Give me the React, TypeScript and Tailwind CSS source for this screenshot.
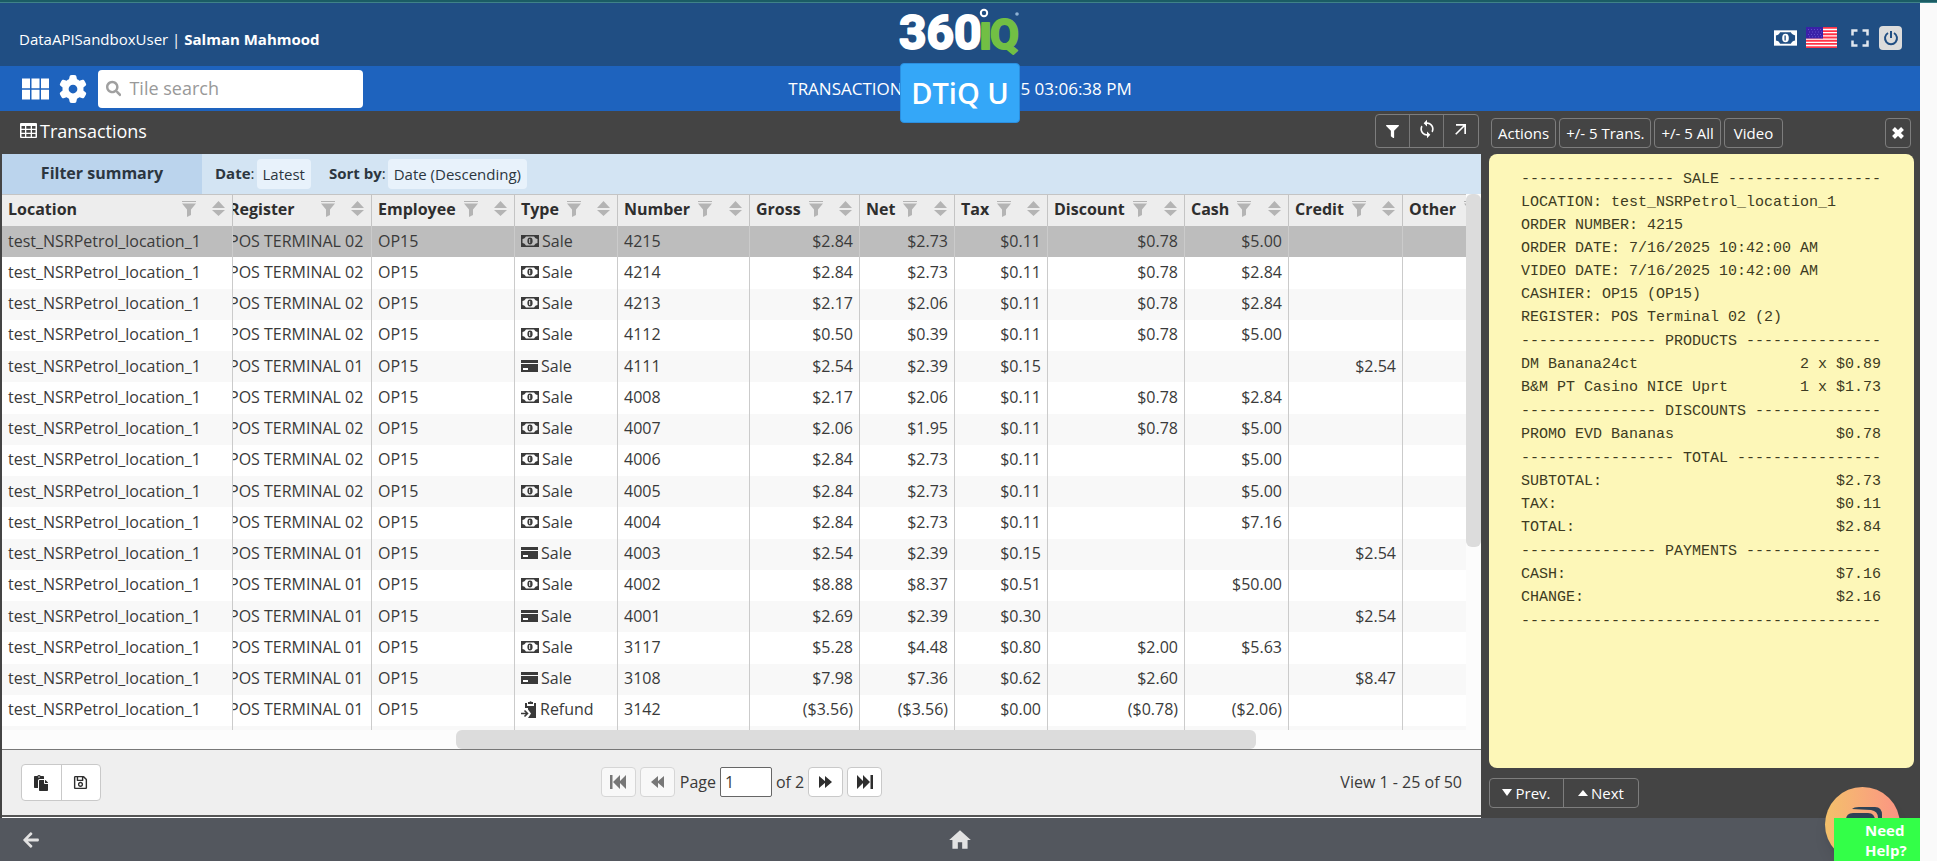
import type { ReactNode } from "react";
import { FaFilter, FaPaste, FaRegSave, FaSearch, FaArrowLeft } from "react-icons/fa";
import { FaGear } from "react-icons/fa6";
import { MdArrowOutward, MdFullscreen, MdHome, MdLoop, MdViewModule } from "react-icons/md";

type Kind = "cash" | "card" | "refund";
type Row = {
  register: string;
  kind: Kind;
  number: string;
  gross: string;
  net: string;
  tax: string;
  discount?: string;
  cash?: string;
  credit?: string;
};

const row = (
  reg: string,
  kind: Kind,
  number: string,
  gross: string,
  net: string,
  tax: string,
  discount = "",
  cash = "",
  credit = "",
): Row => ({ register: `POS TERMINAL ${reg}`, kind, number, gross, net, tax, discount, cash, credit });

const rows: Row[] = [
  row("02", "cash", "4215", "$2.84", "$2.73", "$0.11", "$0.78", "$5.00"),
  row("02", "cash", "4214", "$2.84", "$2.73", "$0.11", "$0.78", "$2.84"),
  row("02", "cash", "4213", "$2.17", "$2.06", "$0.11", "$0.78", "$2.84"),
  row("02", "cash", "4112", "$0.50", "$0.39", "$0.11", "$0.78", "$5.00"),
  row("01", "card", "4111", "$2.54", "$2.39", "$0.15", "", "", "$2.54"),
  row("02", "cash", "4008", "$2.17", "$2.06", "$0.11", "$0.78", "$2.84"),
  row("02", "cash", "4007", "$2.06", "$1.95", "$0.11", "$0.78", "$5.00"),
  row("02", "cash", "4006", "$2.84", "$2.73", "$0.11", "", "$5.00"),
  row("02", "cash", "4005", "$2.84", "$2.73", "$0.11", "", "$5.00"),
  row("02", "cash", "4004", "$2.84", "$2.73", "$0.11", "", "$7.16"),
  row("01", "card", "4003", "$2.54", "$2.39", "$0.15", "", "", "$2.54"),
  row("01", "cash", "4002", "$8.88", "$8.37", "$0.51", "", "$50.00"),
  row("01", "card", "4001", "$2.69", "$2.39", "$0.30", "", "", "$2.54"),
  row("01", "cash", "3117", "$5.28", "$4.48", "$0.80", "$2.00", "$5.63"),
  row("01", "card", "3108", "$7.98", "$7.36", "$0.62", "$2.60", "", "$8.47"),
  row("01", "refund", "3142", "($3.56)", "($3.56)", "$0.00", "($0.78)", "($2.06)"),
];

function MoneyIcon({ className }: { className?: string }) {
  return (
    <svg viewBox="0 0 18 14" className={className} aria-hidden="true">
      <rect x=".75" y="1.75" width="16.5" height="10.5" fill="none" stroke="currentColor" strokeWidth="1.5" />
      <path d="M1 2h4q-1 3-4 3zM17 2h-4q1 3 4 3zM1 12h4q-1-3-4-3zM17 12h-4q1-3 4-3z" fill="currentColor" />
      <ellipse cx="9" cy="7" rx="2.6" ry="3.4" fill="currentColor" />
      <path d="M8.700 5v4" className="stroke-(--hole)" strokeWidth="1" />
    </svg>
  );
}

function CardIcon() {
  return (
    <svg viewBox="0 0 17 14" className="h-[14px] w-[17px]" aria-hidden="true">
      <path d="M0 1h17v3H0zM0 5h17v8H0z" fill="currentColor" />
      <path d="M2 9h5v2H2z" fill="#fff" />
    </svg>
  );
}

function RefundIcon() {
  return (
    <svg viewBox="0 0 16 18" className="h-[18px] w-4" aria-hidden="true">
      <path d="M4 3h2v3h7V3h2v15H7l3-4.500-3-4V8L4 8z" fill="currentColor" />
      <path d="M7 4V2h1.500a1.200 1.200 0 0 1 2.200 0H12v2z" fill="currentColor" />
      <path d="M0 13.500h6M3.500 10.500l3 3-3 3" fill="none" stroke="currentColor" strokeWidth="1.600" />
    </svg>
  );
}

function HeaderFilter() {
  return (
    <svg viewBox="0 0 14 16" className="h-4 w-[14px] shrink-0 text-[#b4b4b4]" aria-hidden="true">
      <path d="M0 0h14v1H0zM0 2.500h14L9 8.500V14l-4 2V8.500z" fill="currentColor" />
    </svg>
  );
}

function SortIcon() {
  return (
    <svg viewBox="0 0 13 16" className="h-4 w-[13px] shrink-0 text-[#b4b4b4]" aria-hidden="true">
      <path d="M6.500 0L13 7H0zM0 9h13L6.500 15z" fill="currentColor" />
    </svg>
  );
}

function TableIcon() {
  return (
    <svg viewBox="0 0 17 15" className="h-[15px] w-[17px]" aria-hidden="true">
      <path
        fill="currentColor"
        fillRule="evenodd"
        d="M1 0h15a1 1 0 0 1 1 1v13a1 1 0 0 1-1 1H1a1 1 0 0 1-1-1V1a1 1 0 0 1 1-1zM1.500 3v2.700H5V3zM6.300 3v2.700h4.400V3zM12 3v2.700h3.500V3zM1.500 7v2.700H5V7zM6.300 7v2.700h4.400V7zM12 7v2.700h3.500V7zM1.500 11v2.700H5V11zM6.300 11v2.700h4.400V11zM12 11v2.700h3.500V11z"
      />
    </svg>
  );
}

function SkipIcon({ bar, flip }: { bar?: boolean; flip?: boolean }) {
  return (
    <svg viewBox="0 0 16 14" className={flip ? "h-[14px] w-4 -scale-x-100" : "h-[14px] w-4"} aria-hidden="true">
      <path d={bar ? "M0 0l7 7-7 7zM6 0l7 7-7 7zM13.500 0H16v14h-2.500z" : "M1 1l7 6-7 6zM7 1l7 6-7 6z"} fill="currentColor" />
    </svg>
  );
}

function FlagIcon() {
  return (
    <svg viewBox="0 0 31 21" className="h-[21px] w-[31px]" aria-hidden="true">
      <rect width="31" height="21" fill="#ff3347" />
      <path d="M0 2.500h31M0 5.700h31M0 8.900h31M0 12.100h31M0 15.300h31M0 18.500h31" stroke="#fff" strokeWidth="1.300" />
      <rect width="17" height="11.500" fill="#3a21a8" />
      <path d="M2 2.500h14M3 5h13M2 7.500h14M3 9.800h13" stroke="#6c5bd0" strokeWidth=".8" strokeDasharray="1 2" />
    </svg>
  );
}

function PowerIcon() {
  return (
    <svg viewBox="0 0 16 16" className="size-4" fill="none" stroke="currentColor" strokeWidth="2" aria-hidden="true">
      <path d="M5 3a6 6 0 1 0 6 0M8 1v7" />
    </svg>
  );
}

function CloseIcon() {
  return (
    <svg viewBox="0 0 12 12" className="size-3" stroke="currentColor" strokeWidth="4" aria-hidden="true">
      <path d="M1.500 1.500l9 9M10.500 1.500l-9 9" />
    </svg>
  );
}

function Logo() {
  return (
    <svg viewBox="0 0 120 54" className="h-[54px] w-[120px] overflow-visible" role="img" aria-label="360iQ">
      <g fontFamily="Roboto, sans-serif" fontWeight="700" strokeWidth="2" strokeLinejoin="round">
        <text x="-1" y="46" fontSize="48" fill="#fff" stroke="#fff">
          360
        </text>
        <text x="79" y="46" fontSize="48" fill="#72bf44" stroke="#72bf44">
          ı
        </text>
        <text x="90" y="46" fontSize="42" fill="#72bf44" stroke="#72bf44">
          Q
        </text>
      </g>
      <circle cx="84" cy="10" r="3.200" fill="none" stroke="#fff" strokeWidth="2" />
      <circle cx="117" cy="11" r="1.800" fill="#8fb2d4" />
    </svg>
  );
}

const columns: { name: string; spread?: boolean }[] = [
  { name: "Location", spread: true },
  { name: "Register", spread: true },
  { name: "Employee" },
  { name: "Type" },
  { name: "Number" },
  { name: "Gross" },
  { name: "Net" },
  { name: "Tax" },
  { name: "Discount" },
  { name: "Cash" },
  { name: "Credit" },
  { name: "Other" },
];

function HeadCell({ name, spread, index }: { name: string; spread?: boolean; index: number }) {
  return (
    <th className="h-8 overflow-hidden border-t border-r border-[#c4c4c4] p-0 pb-[3px] text-left font-bold last:border-r-0">
      <div className={index === 1 ? "-ml-1 flex items-center pr-[7px]" : "flex items-center pr-[7px] pl-[6px]"}>
        <span className={spread ? "grow" : ""}>{name}</span>
        <span className={spread ? "mr-4 flex" : "mr-auto ml-2 flex"}>
          <HeaderFilter />
        </span>
        <SortIcon />
      </div>
    </th>
  );
}

function Cell({ children, right, clipped }: { children?: ReactNode; right?: boolean; clipped?: boolean }) {
  return (
    <td
      className={
        right
          ? "overflow-hidden border-r border-[#cbcbcb] p-0 pr-[6px] pb-[2px] text-right last:border-r-0"
          : "overflow-hidden border-r border-[#cbcbcb] p-0 pb-[2px] pl-[6px] last:border-r-0"
      }
    >
      <div className={clipped ? "-ml-[10px]" : ""}>{children}</div>
    </td>
  );
}

function TransactionTable() {
  return (
    <table className="h-[536px] w-full table-fixed border-separate border-spacing-0 whitespace-nowrap">
      <colgroup>
        <col className="w-[231px]" />
        <col className="w-[139px]" />
        <col className="w-[143px]" />
        <col className="w-[103px]" />
        <col className="w-[132px]" />
        <col className="w-[110px]" />
        <col className="w-[95px]" />
        <col className="w-[93px]" />
        <col className="w-[137px]" />
        <col className="w-[104px]" />
        <col className="w-[114px]" />
        <col />
      </colgroup>
      <thead className="bg-[#ededed] text-[#2e2e2e]">
        <tr>
          {columns.map((c, i) => (
            <HeadCell key={c.name} index={i} name={c.name} spread={c.spread} />
          ))}
        </tr>
      </thead>
      <tbody>
        {rows.map((r, i) => (
          <tr
            key={r.number}
            className={i === 0 ? "bg-[#bdbdbd] [--hole:#bdbdbd]" : "bg-white [--hole:#fff] odd:bg-[#f8f8f8]"}
          >
            <Cell>test_NSRPetrol_location_1</Cell>
            <Cell clipped>{r.register}</Cell>
            <Cell>OP15</Cell>
            <Cell>
              <span className="flex items-center gap-[3px]">
                {r.kind === "cash" && <MoneyIcon className="h-[14px] w-[18px]" />}
                {r.kind === "card" && <CardIcon />}
                {r.kind === "refund" && <RefundIcon />}
                {r.kind === "refund" ? "Refund" : "Sale"}
              </span>
            </Cell>
            <Cell>{r.number}</Cell>
            <Cell right>{r.gross}</Cell>
            <Cell right>{r.net}</Cell>
            <Cell right>{r.tax}</Cell>
            <Cell right>{r.discount}</Cell>
            <Cell right>{r.cash}</Cell>
            <Cell right>{r.credit}</Cell>
            <Cell />
          </tr>
        ))}
        <tr aria-hidden="true" className="bg-[#f8f8f8]">
          {columns.map((c) => (
            <td key={c.name} className="h-1 border-r border-[#cbcbcb] p-0 last:border-r-0" />
          ))}
        </tr>
      </tbody>
    </table>
  );
}

const receipt: (string | [string, string])[][] = [
  [
    "----------------- SALE -----------------",
    "LOCATION: test_NSRPetrol_location_1",
    "ORDER NUMBER: 4215",
    "ORDER DATE: 7/16/2025 10:42:00 AM",
    "VIDEO DATE: 7/16/2025 10:42:00 AM",
    "CASHIER: OP15 (OP15)",
    "REGISTER: POS Terminal 02 (2)",
  ],
  ["--------------- PRODUCTS ---------------", ["DM Banana24ct", "2 x $0.89"], ["B&M PT Casino NICE Uprt", "1 x $1.73"]],
  ["--------------- DISCOUNTS --------------", ["PROMO EVD Bananas", "$0.78"]],
  ["----------------- TOTAL ----------------", ["SUBTOTAL:", "$2.73"], ["TAX:", "$0.11"], ["TOTAL:", "$2.84"]],
  ["--------------- PAYMENTS ---------------", ["CASH:", "$7.16"], ["CHANGE:", "$2.16"]],
  ["----------------------------------------"],
];

function Receipt() {
  return (
    <section
      aria-label="Receipt"
      className="flex grow flex-col gap-px rounded-lg bg-[#fdf7b8] pt-[14px] pl-8 font-['Liberation_Mono',monospace] text-[15px] leading-[23px] whitespace-pre text-[#3d3b22]"
    >
      {receipt.map((group, g) => (
        <div key={g} className="w-[360px]">
          {group.map((line, i) =>
            typeof line === "string" ? (
              <p key={i}>{line}</p>
            ) : (
              <p key={i} className="flex justify-between">
                <span>{line[0]}</span>
                <span>{line[1]}</span>
              </p>
            ),
          )}
        </div>
      ))}
    </section>
  );
}

function PanelButton({ children, label }: { children: ReactNode; label?: string }) {
  return (
    <button
      aria-label={label}
      className="flex h-[30px] items-center rounded border border-[#7d7d7d] px-[6px] text-[15px] text-white"
    >
      {children}
    </button>
  );
}

function PagerButton({ label, disabled, children }: { label: string; disabled?: boolean; children: ReactNode }) {
  return (
    <button
      aria-label={label}
      disabled={disabled}
      className="flex h-[30px] w-[35px] items-center justify-center rounded border border-[#c9c9c9] bg-white text-[#2e2e2e] disabled:border-[#d6d6d6] disabled:bg-[#f8f8f8] disabled:text-[#777]"
    >
      {children}
    </button>
  );
}

export default function App() {
  return (
    <div className="flex h-screen flex-col overflow-hidden bg-[#fafafa] font-['Open_Sans',sans-serif] text-base leading-6 text-[#3a3a3a]">
      <div className="h-[3px] shrink-0 border-b border-[#3f8288] bg-[#1b5c64]" />
      <div className="relative mr-[17px] flex grow flex-col bg-[#444]">
        <header className="flex h-[63px] shrink-0 items-center justify-between bg-[#204e83] px-[18px] text-white">
          <p className="w-[400px] pt-[9px] pl-px text-[15px]">
            DataAPISandboxUser | <strong>Salman Mahmood</strong>
          </p>
          <div className="-mt-[9px]">
            <Logo />
          </div>
          <nav aria-label="Account" className="flex w-[400px] items-center justify-end pt-[6px]">
            <button aria-label="Cash" className="mr-[9px] [--hole:#204e83]">
              <MoneyIcon className="h-[18px] w-[23px]" />
            </button>
            <button aria-label="Language" className="mr-2">
              <FlagIcon />
            </button>
            <button aria-label="Full screen" className="mr-1 text-[#dfe6ee]">
              <MdFullscreen className="size-[30px]" />
            </button>
            <button aria-label="Log out" className="flex h-6 w-[23px] items-center justify-center rounded bg-[#dcdcdc] text-[#204e83]">
              <PowerIcon />
            </button>
          </nav>
        </header>

        <div className="flex h-[45px] shrink-0 items-center bg-[#1e63be] text-white">
          <div className="flex-1">
            <div className="flex items-center pl-[17px]">
              <button aria-label="Tiles">
                <MdViewModule className="h-[36px] w-[37px]" />
              </button>
              <button aria-label="Settings" className="ml-[5px]">
                <FaGear className="size-[28px]" />
              </button>
              <label className="ml-[11px] flex h-[38px] w-[265px] items-center gap-2 rounded bg-white pl-2 text-[#999]">
                <FaSearch className="size-[17px] text-[#a0a0a0]" />
                <span className="sr-only">Tile search</span>
                <input
                  placeholder="Tile search"
                  className="w-full bg-transparent pb-px text-lg outline-none placeholder:text-[#999]"
                />
              </label>
            </div>
          </div>
          <p className="flex gap-7 text-[17px] whitespace-nowrap">
            <span>TRANSACTIONS</span>
            <span>07/16/2025 03:06:38 PM</span>
          </p>
          <div className="flex-1" />
        </div>

        <button className="absolute top-[60px] left-1/2 h-[60px] w-[120px] -translate-x-1/2 rounded-sm border border-[#2b8fe0] bg-[#34a7f8] text-[29px] font-semibold text-white">
          DTiQ U
        </button>

        <main className="flex grow">
          <section aria-label="Transactions" className="flex min-w-0 grow flex-col pl-[2px]">
            <div className="flex h-[43px] items-center justify-between pr-[2px] pl-[18px] text-white">
              <h1 className="flex items-center gap-[3px] pb-1 text-lg">
                <TableIcon />
                Transactions
              </h1>
              <div className="mb-[3px] flex h-[34px] divide-x divide-[#777] rounded border border-[#7d7d7d]">
                <button aria-label="Filter" className="flex w-[34px] items-center justify-center">
                  <FaFilter className="size-[13px]" />
                </button>
                <button aria-label="Refresh" className="flex w-[34px] items-center justify-center pb-1">
                  <MdLoop className="size-5" />
                </button>
                <button aria-label="Expand" className="flex w-[34px] items-center justify-center pb-1">
                  <MdArrowOutward className="size-5" />
                </button>
              </div>
            </div>
            <div className="flex h-10 items-center bg-[#d3e4f3] pb-px text-[15px] text-[#2c3640]">
              <h2 className="-mb-px flex h-10 w-[200px] items-center justify-center bg-[#bbd4ed] pb-[2px] text-base font-bold">
                Filter summary
              </h2>
              <p className="ml-[13px] pb-[2px]">
                <b>Date</b>:
              </p>
              <span className="ml-[2px] flex h-[30px] items-center rounded bg-[#e8f2fb] px-[6px]">Latest</span>
              <p className="ml-[18px] pb-[2px]">
                <b>Sort by</b>:
              </p>
              <span className="ml-[2px] flex h-[30px] items-center rounded bg-[#e8f2fb] px-[6px]">Date (Descending)</span>
            </div>
            <div className="flex bg-[#fcfcfc]">
              <div className="min-w-0 grow">
                <TransactionTable />
              </div>
              <div className="w-[15px] shrink-0">
                <div className="h-[353px] rounded-md bg-[#dcdcdc]" />
              </div>
            </div>
            <div className="h-5 border-b border-[#777] bg-[#fcfcfc] pl-[454px]">
              <div className="h-[19px] w-[800px] rounded-md bg-[#dcdcdc]" />
            </div>
            <footer className="flex grow items-center border-b-2 border-[#555] bg-[#efefef]">
              <div className="flex-1">
                <div className="ml-[19px] flex h-[37px] w-[80px] divide-x divide-[#c9c9c9] rounded border border-[#c9c9c9] bg-white text-[#2e2e2e]">
                  <button aria-label="Copy" className="flex flex-1 items-center justify-center">
                    <FaPaste className="size-4" />
                  </button>
                  <button aria-label="Save" className="flex flex-1 items-center justify-center">
                    <FaRegSave className="size-[15px]" />
                  </button>
                </div>
              </div>
              <div className="flex items-center gap-1 pb-px">
                <PagerButton label="First page" disabled>
                  <SkipIcon bar flip />
                </PagerButton>
                <PagerButton label="Previous page" disabled>
                  <SkipIcon flip />
                </PagerButton>
                <label className="flex items-center gap-1 pl-px">
                  Page
                  <input defaultValue="1" className="h-[30px] w-[52px] rounded-xs border border-[#666] bg-white px-1" />
                </label>
                <span>of 2</span>
                <PagerButton label="Next page">
                  <SkipIcon />
                </PagerButton>
                <PagerButton label="Last page">
                  <SkipIcon bar />
                </PagerButton>
              </div>
              <div className="flex-1">
                <p className="pr-[19px] pb-px text-right">View 1 - 25 of 50</p>
              </div>
            </footer>
            <div className="h-px bg-white" />
          </section>

          <aside className="flex w-[439px] shrink-0 flex-col pr-[6px] pl-2">
            <div className="flex h-[43px] items-end gap-[3px] pr-[3px] pb-[6px] pl-[2px]">
              <PanelButton>Actions</PanelButton>
              <PanelButton>+/- 5 Trans.</PanelButton>
              <PanelButton>+/- 5 All</PanelButton>
              <PanelButton>
                <span className="px-[3px]">Video</span>
              </PanelButton>
              <span className="grow" />
              <PanelButton label="Close">
                <CloseIcon />
              </PanelButton>
            </div>
            <Receipt />
            <div className="flex h-[50px] items-center pb-[1px]">
              <div className="flex h-[30px] divide-x divide-[#7d7d7d] rounded border border-[#7d7d7d] text-[15px] text-white">
                <button className="flex w-[74px] items-center justify-center gap-[3px]">
                  <svg viewBox="0 0 10 7" className="h-[7px] w-[10px]" aria-hidden="true">
                    <path d="M0 0h10L5 7z" fill="currentColor" />
                  </svg>
                  Prev.
                </button>
                <button className="flex w-[74px] items-center justify-center gap-[3px]">
                  <svg viewBox="0 0 10 6" className="h-[6px] w-[10px]" aria-hidden="true">
                    <path d="M0 6h10L5 0z" fill="currentColor" />
                  </svg>
                  Next
                </button>
              </div>
            </div>
          </aside>
        </main>

        <nav aria-label="Main" className="flex h-[43px] shrink-0 items-center bg-[#53575e] text-[#e2e2e2]">
          <div className="flex-1">
            <button aria-label="Back" className="ml-[22px] flex">
              <FaArrowLeft className="size-[18px]" />
            </button>
          </div>
          <button aria-label="Home">
            <MdHome className="size-[26px]" />
          </button>
          <div className="flex-1" />
        </nav>

        <button
          aria-label="Chat"
          className="absolute right-[20px] -bottom-px flex size-[75px] justify-center rounded-full bg-linear-to-r from-[#f3c06a] to-[#fb9483] pt-5 shadow-lg"
        >
          <svg viewBox="0 0 40 32" className="h-8 w-10" fill="#2f4256" aria-hidden="true">
            <path d="M9 2q2-2 7-2h16q7 0 7 8v13h-4V11q0-7-7-8z" />
            <path d="M3 13q0-7 7-7h15q7 0 7 8v12H3z" />
          </svg>
        </button>
        <a
          href="#help"
          className="absolute right-0 bottom-0 h-[43px] w-[86px] bg-[#33ff48] pt-[2px] pl-[31px] text-[15px] leading-5 font-bold text-white"
        >
          Need Help?
        </a>
      </div>
    </div>
  );
}
